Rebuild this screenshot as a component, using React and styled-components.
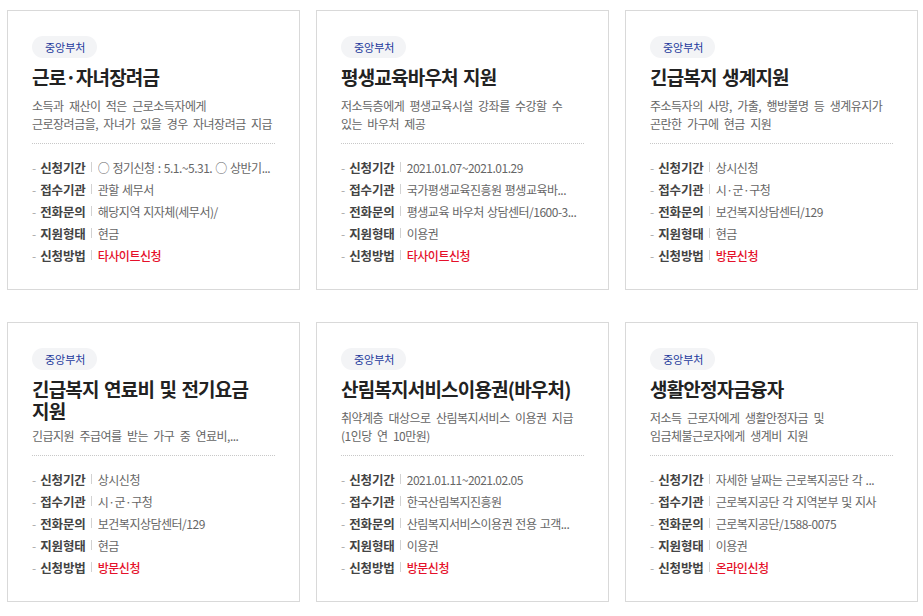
import React from "react";
import styled, { createGlobalStyle } from "styled-components";

const GlobalStyle = createGlobalStyle`
  html, body { margin: 0; padding: 0; background: #ffffff; }
  body { font-family: "Noto Sans CJK KR", "Noto Sans", sans-serif; color: #333; }
  * { box-sizing: border-box; }
`;

const Grid = styled.ul`
  list-style: none;
  margin: 0;
  padding: 10px 0 0 7px;
  display: grid;
  grid-template-columns: repeat(3, 293px);
  column-gap: 16px;
  row-gap: 32px;
`;

const Card = styled.li`
  border: 1px solid #d9d9d9;
  background: #fff;
  padding: 25px 24px 23px;
  display: flex;
  flex-direction: column;
  word-break: keep-all;
`;

const Badge = styled.span`
  align-self: flex-start;
  height: 22px;
  line-height: 22px;
  padding: 0 12px 0 13px;
  border-radius: 11px;
  background: #f3f4f6;
  color: #24399c;
  font-size: 11px;
`;

const Summary = styled.div`
  margin-top: 8px;
  height: 67px;
  display: flex;
  flex-direction: column;
  justify-content: space-between;
`;

const Title = styled.h3`
  margin: 0;
  font-size: 19px;
  line-height: 22px;
  font-weight: 700;
  color: #222;
  letter-spacing: -0.8px;
  word-spacing: 1.8px;
`;

const Desc = styled.p`
  margin: 0;
  font-size: 12px;
  line-height: 18px;
  color: #666;
  letter-spacing: -0.5px;
  word-spacing: 3.1px;
`;

const Divider = styled.hr`
  margin: 10px 0 12px;
  border: 0;
  border-top: 1px dotted #c8c8c8;
  height: 0;
`;

const InfoList = styled.dl`
  margin: 0;
  display: flex;
  flex-direction: column;
`;

const InfoRow = styled.div`
  display: flex;
  align-items: center;
  height: 22px;
  min-width: 0;
`;

const Dash = styled.span`
  color: #a8a8a8;
  font-size: 12px;
  margin-right: 4px;
`;

const Label = styled.dt`
  font-size: 12.5px;
  font-weight: 700;
  color: #444;
  letter-spacing: -0.1px;
  white-space: nowrap;
`;

const Pipe = styled.span`
  display: inline-block;
  width: 1px;
  height: 10px;
  background: #d2d2d2;
  margin: 0 6px 0 5px;
  flex: none;
`;

const Value = styled.dd`
  margin: 0;
  flex: 1;
  min-width: 0;
  font-size: 12px;
  color: ${(p) => (p.$accent ? "#e5102a" : "#666")};
  font-weight: ${(p) => (p.$accent ? 500 : 400)};
  letter-spacing: -0.5px;
  word-spacing: 1px;
  white-space: nowrap;
  overflow: hidden;
  text-overflow: ellipsis;
`;

const cards = [
  {
    title: "근로·자녀장려금",
    desc: "소득과 재산이 적은 근로소득자에게 근로장려금을, 자녀가 있을 경우 자녀장려금 지급",
    period: "○ 정기신청 : 5.1.~5.31. ○ 상반기...",
    agency: "관할 세무서",
    phone: "해당지역 지자체(세무서)/",
    type: "현금",
    method: "타사이트신청",
  },
  {
    title: "평생교육바우처 지원",
    desc: "저소득층에게 평생교육시설 강좌를 수강할 수 있는 바우처 제공",
    period: "2021.01.07~2021.01.29",
    agency: "국가평생교육진흥원 평생교육바...",
    phone: "평생교육 바우처 상담센터/1600-3...",
    type: "이용권",
    method: "타사이트신청",
  },
  {
    title: "긴급복지 생계지원",
    desc: "주소득자의 사망, 가출, 행방불명 등 생계유지가 곤란한 가구에 현금 지원",
    period: "상시신청",
    agency: "시·군·구청",
    phone: "보건복지상담센터/129",
    type: "현금",
    method: "방문신청",
  },
  {
    title: "긴급복지 연료비 및 전기요금 지원",
    desc: "긴급지원 주급여를 받는 가구 중 연료비,...",
    period: "상시신청",
    agency: "시·군·구청",
    phone: "보건복지상담센터/129",
    type: "현금",
    method: "방문신청",
  },
  {
    title: "산림복지서비스이용권(바우처)",
    desc: "취약계층 대상으로 산림복지서비스 이용권 지급 (1인당 연 10만원)",
    period: "2021.01.11~2021.02.05",
    agency: "한국산림복지진흥원",
    phone: "산림복지서비스이용권 전용 고객...",
    type: "이용권",
    method: "방문신청",
  },
  {
    title: "생활안정자금융자",
    desc: "저소득 근로자에게 생활안정자금 및 임금체불근로자에게 생계비 지원",
    period: "자세한 날짜는 근로복지공단 각 ...",
    agency: "근로복지공단 각 지역본부 및 지사",
    phone: "근로복지공단/1588-0075",
    type: "이용권",
    method: "온라인신청",
  },
];

function Info({ label, value, accent }) {
  return (
    <InfoRow>
      <Dash>-</Dash>
      <Label>{label}</Label>
      <Pipe />
      <Value $accent={accent}>{value}</Value>
    </InfoRow>
  );
}

export default function App() {
  return (
    <>
      <GlobalStyle />
      <Grid>
        {cards.map((c) => (
          <Card key={c.title}>
            <Badge>중앙부처</Badge>
            <Summary>
              <Title>{c.title}</Title>
              <Desc>{c.desc}</Desc>
            </Summary>
            <Divider />
            <InfoList>
              <Info label="신청기간" value={c.period} />
              <Info label="접수기관" value={c.agency} />
              <Info label="전화문의" value={c.phone} />
              <Info label="지원형태" value={c.type} />
              <Info label="신청방법" value={c.method} accent />
            </InfoList>
          </Card>
        ))}
      </Grid>
    </>
  );
}
